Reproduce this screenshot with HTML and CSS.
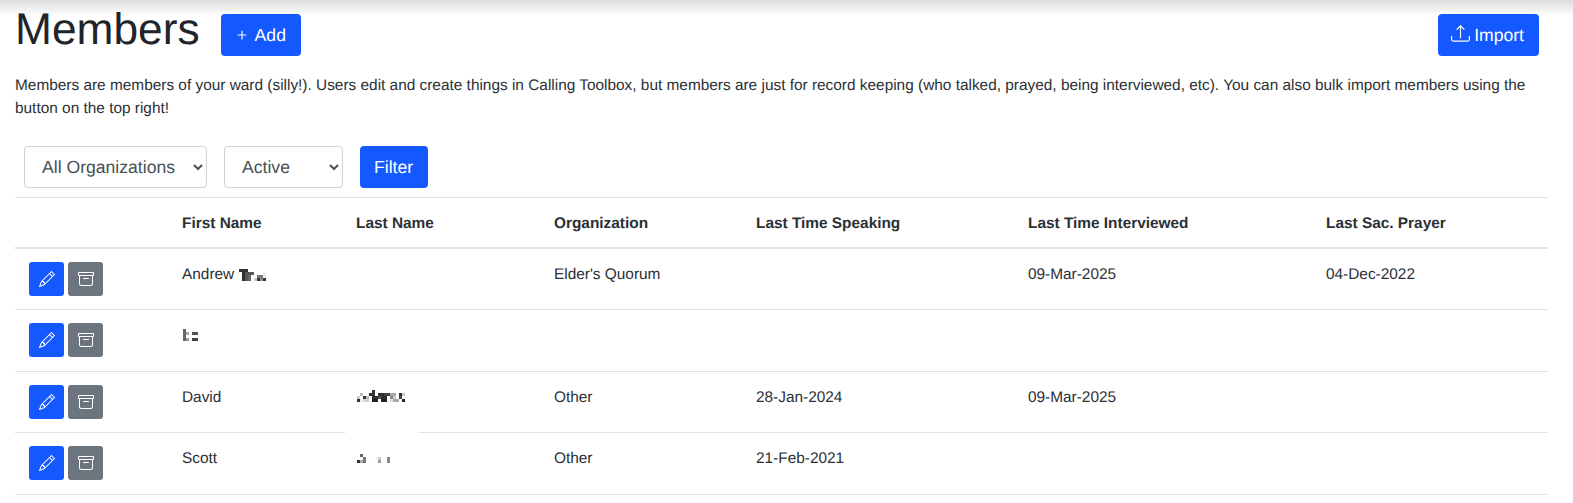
FILE: index.html
```html
<!DOCTYPE html>
<html lang="en">
<head>
    <meta charset="UTF-8">
    <title>Members</title>
    <link rel="stylesheet" href="styles.css">
</head>
<body>
    <div class="titleBar">
        <h1>Members</h1>
        <button class="btn addBtn">
            <svg class="plusIcon" viewBox="0 0 16 16" fill="currentColor"><path d="M8 4a.5.5 0 0 1 .5.5v3h3a.5.5 0 0 1 0 1h-3v3a.5.5 0 0 1-1 0v-3h-3a.5.5 0 0 1 0-1h3v-3A.5.5 0 0 1 8 4z"/></svg>
            Add
        </button>
        <button class="btn importBtn">
            <svg class="uploadIcon" viewBox="0 0 16 16" fill="currentColor"><path d="M.5 9.9a.5.5 0 0 1 .5.5v2.5a1 1 0 0 0 1 1h12a1 1 0 0 0 1-1v-2.5a.5.5 0 0 1 1 0v2.5a2 2 0 0 1-2 2H2a2 2 0 0 1-2-2v-2.5a.5.5 0 0 1 .5-.5z"/><path d="M7.646 1.146a.5.5 0 0 1 .708 0l3 3a.5.5 0 0 1-.708.708L8.5 2.707V11.5a.5.5 0 0 1-1 0V2.707L5.354 4.854a.5.5 0 1 1-.708-.708l3-3z"/></svg>
            Import
        </button>
    </div>
    <p class="intro">Members are members of your ward (silly!). Users edit and create things in Calling Toolbox, but members are just for record keeping (who talked, prayed, being interviewed, etc). You can also bulk import members using the button on the top right!</p>

    <div class="filters">
        <select class="pick orgPick"><option>All Organizations</option></select>
        <select class="pick statusPick"><option>Active</option></select>
        <button class="btn filterBtn">Filter</button>
    </div>

    <table class="members">
        <colgroup>
            <col class="colActions"><col class="colFirst"><col class="colLast"><col class="colOrg"><col class="colSpeak"><col class="colInterview"><col class="colPrayer">
        </colgroup>
        <thead>
            <tr>
                <th></th>
                <th>First Name</th>
                <th>Last Name</th>
                <th>Organization</th>
                <th>Last Time Speaking</th>
                <th>Last Time Interviewed</th>
                <th>Last Sac. Prayer</th>
            </tr>
        </thead>
        <tbody>
            <tr>
                <td class="actions"><div class="actionBtns">
                    <button class="iconBtn"><svg viewBox="0 0 16 16" fill="currentColor"><use href="#pencil"/></svg></button>
                    <button class="iconBtn grey"><svg viewBox="0 0 16 16" fill="currentColor"><use href="#archive"/></svg></button>
                </div></td>
                <td>Andrew
                    <svg class="blur blurAndrew" viewBox="0 0 27 13">
                        <rect x="0" y="0" width="9" height="3" fill="#333"/>
                        <rect x="3" y="3" width="3" height="9" fill="#2c2f33"/>
                        <rect x="6" y="3" width="3" height="9" fill="#555"/>
                        <rect x="9" y="3" width="6" height="3" fill="#555"/>
                        <rect x="9" y="6" width="3" height="6" fill="#666"/>
                        <rect x="15" y="9" width="3" height="3" fill="#ccc"/>
                        <rect x="18" y="6" width="6" height="3" fill="#777"/>
                        <rect x="18" y="9" width="3" height="3" fill="#333"/>
                        <rect x="21" y="9" width="3" height="3" fill="#888"/>
                        <rect x="24" y="3" width="3" height="6" fill="#eee"/>
                        <rect x="24" y="9" width="3" height="3" fill="#333"/>
                    </svg>
                </td>
                <td></td><td>Elder's Quorum</td><td></td><td>09-Mar-2025</td><td>04-Dec-2022</td>
            </tr>
            <tr>
                <td class="actions"><div class="actionBtns">
                    <button class="iconBtn"><svg viewBox="0 0 16 16" fill="currentColor"><use href="#pencil"/></svg></button>
                    <button class="iconBtn grey"><svg viewBox="0 0 16 16" fill="currentColor"><use href="#archive"/></svg></button>
                </div></td>
                <td>
                    <svg class="blur blurFirst" viewBox="0 0 16 12">
                        <rect x="0" y="0" width="3" height="12" fill="#666"/>
                        <rect x="3" y="3" width="3" height="3" fill="#aaa"/>
                        <rect x="3" y="9" width="3" height="3" fill="#999"/>
                        <rect x="9" y="3" width="6" height="3" fill="#555"/>
                        <rect x="9" y="9" width="6" height="3" fill="#444"/>
                    </svg>
                </td>
                <td></td><td></td><td></td><td></td><td></td>
            </tr>
            <tr>
                <td class="actions"><div class="actionBtns">
                    <button class="iconBtn"><svg viewBox="0 0 16 16" fill="currentColor"><use href="#pencil"/></svg></button>
                    <button class="iconBtn grey"><svg viewBox="0 0 16 16" fill="currentColor"><use href="#archive"/></svg></button>
                </div></td>
                <td>David</td>
                <td>
                    <svg class="blur blurDavid" viewBox="0 0 48 12">
                        <rect x="15" y="0" width="3" height="3" fill="#333"/>
                        <rect x="3" y="3" width="3" height="3" fill="#bbb"/>
                        <rect x="12" y="3" width="6" height="3" fill="#333"/>
                        <rect x="21" y="3" width="6" height="3" fill="#2c2f33"/>
                        <rect x="27" y="3" width="6" height="3" fill="#444"/>
                        <rect x="33" y="3" width="6" height="3" fill="#aaa"/>
                        <rect x="42" y="3" width="3" height="3" fill="#333"/>
                        <rect x="45" y="3" width="3" height="3" fill="#ccc"/>
                        <rect x="0" y="6" width="3" height="3" fill="#ccc"/>
                        <rect x="6" y="6" width="3" height="3" fill="#333"/>
                        <rect x="9" y="6" width="3" height="3" fill="#bbb"/>
                        <rect x="15" y="6" width="6" height="3" fill="#2c2f33"/>
                        <rect x="21" y="6" width="3" height="3" fill="#555"/>
                        <rect x="24" y="6" width="6" height="3" fill="#2c2f33"/>
                        <rect x="33" y="6" width="3" height="3" fill="#888"/>
                        <rect x="36" y="6" width="3" height="3" fill="#ccc"/>
                        <rect x="42" y="6" width="3" height="3" fill="#444"/>
                        <rect x="0" y="9" width="3" height="3" fill="#333"/>
                        <rect x="3" y="9" width="3" height="3" fill="#eee"/>
                        <rect x="6" y="9" width="3" height="3" fill="#ddd"/>
                        <rect x="9" y="9" width="3" height="3" fill="#ccc"/>
                        <rect x="15" y="9" width="6" height="3" fill="#222"/>
                        <rect x="24" y="9" width="6" height="3" fill="#222"/>
                        <rect x="33" y="9" width="3" height="3" fill="#ddd"/>
                        <rect x="36" y="9" width="6" height="3" fill="#aaa"/>
                        <rect x="45" y="9" width="3" height="3" fill="#222"/>
                    </svg>
                </td>
                <td>Other</td><td>28-Jan-2024</td><td>09-Mar-2025</td><td></td>
            </tr>
            <tr>
                <td class="actions"><div class="actionBtns">
                    <button class="iconBtn"><svg viewBox="0 0 16 16" fill="currentColor"><use href="#pencil"/></svg></button>
                    <button class="iconBtn grey"><svg viewBox="0 0 16 16" fill="currentColor"><use href="#archive"/></svg></button>
                </div></td>
                <td>Scott</td>
                <td>
                    <span class="lineGap"></span>
                    <svg class="blur blurScott" viewBox="0 0 36 9">
                        <rect x="0" y="6" width="3" height="3" fill="#333"/>
                        <rect x="3" y="0" width="3" height="3" fill="#666"/>
                        <rect x="6" y="3" width="3" height="6" fill="#777"/>
                        <rect x="3" y="6" width="3" height="3" fill="#aaa"/>
                        <rect x="18" y="3" width="3" height="3" fill="#f3f3f3"/>
                        <rect x="21" y="3" width="3" height="3" fill="#ccc"/>
                        <rect x="21" y="6" width="3" height="3" fill="#999"/>
                        <rect x="30" y="3" width="3" height="6" fill="#888"/>
                    </svg>
                </td>
                <td>Other</td><td>21-Feb-2021</td><td></td><td></td>
            </tr>
        </tbody>
    </table>

    <svg class="iconDefs">
        <symbol id="pencil" viewBox="0 0 16 16"><path d="M12.146.146a.5.5 0 0 1 .708 0l3 3a.5.5 0 0 1 0 .708l-10 10a.5.5 0 0 1-.168.11l-5 2a.5.5 0 0 1-.65-.65l2-5a.5.5 0 0 1 .11-.168l10-10zM11.207 2.5 13.5 4.793 14.793 3.5 12.5 1.207 11.207 2.5zm1.586 3L10.5 3.207 4 9.707V10h.5a.5.5 0 0 1 .5.5v.5h.5a.5.5 0 0 1 .5.5v.5h.293l6.5-6.5zm-9.761 5.175-.106.106-1.528 3.821 3.821-1.528.106-.106A.5.5 0 0 1 5 12.5V12h-.5a.5.5 0 0 1-.5-.5V11h-.5a.5.5 0 0 1-.468-.325z"/></symbol>
        <symbol id="archive" viewBox="0 0 16 16"><path d="M0 2a1 1 0 0 1 1-1h14a1 1 0 0 1 1 1v2a1 1 0 0 1-1 1v7.5a2.5 2.5 0 0 1-2.5 2.5h-9A2.5 2.5 0 0 1 1 12.5V5a1 1 0 0 1-1-1V2zm2 3v7.5A1.5 1.5 0 0 0 3.5 14h9a1.5 1.5 0 0 0 1.5-1.5V5H2zm13-3H1v2h14V2zM5 7.5a.5.5 0 0 1 .5-.5h5a.5.5 0 0 1 0 1h-5a.5.5 0 0 1-.5-.5z"/></symbol>
    </svg>
</body>
</html>
```

FILE: styles.css
```css
html, body {
    height: 100%;
}
body {
    margin: 0;
    padding: 0 25px 0 15px;
    box-sizing: border-box;
    overflow: hidden;
    font-family: "Liberation Sans", Arial, sans-serif;
    font-size: 15.4px;
    color: #2b3035;
    text-rendering: geometricPrecision;
    background: linear-gradient(#dcdcdc, #ffffff) no-repeat top / 100% 16px #fff;
}
.titleBar {
    display: flex;
    align-items: flex-start;
    height: 56px;
    padding-top: 5px;
    box-sizing: border-box;
}
h1 {
    margin: 0 21px 0 0;
    font-size: 44.3px;
    font-weight: 400;
    line-height: 50px;
    color: #212529;
}
.btn {
    height: 42px;
    padding: 0 14px;
    border: 0;
    border-radius: 4px;
    background-color: #1458ff;
    color: #fff;
    font-family: inherit;
    font-size: 17.6px;
    text-rendering: geometricPrecision;
    white-space: nowrap;
}
.addBtn {
    display: flex;
    align-items: center;
    gap: 4px;
    margin-top: 9px;
    padding: 0 15px 0 12px;
}
.plusIcon {
    width: 18px;
    height: 18px;
}
.importBtn {
    display: flex;
    align-items: center;
    gap: 4px;
    margin-top: 9px;
    margin-left: auto;
    margin-right: 9px;
    padding: 0 15px 0 13px;
}
.uploadIcon {
    width: 19px;
    height: 19px;
    margin-top: -3px;
}
.filterBtn {
    padding: 0 15px 0 14px;
}
.intro {
    margin: 18px 0 0;
    line-height: 23px;
}
.filters {
    display: flex;
    align-items: center;
    gap: 17px;
    height: 42px;
    margin: 26px 0 9px 9px;
}
.pick {
    height: 42px;
    padding: 0 0 0 13px;
    border: 1px solid #ced4da;
    border-radius: 4px;
    background-color: #fff;
    color: #495057;
    font-family: inherit;
    font-size: 17.6px;
    text-rendering: geometricPrecision;
}
.orgPick {
    width: 183px;
}
.statusPick {
    width: 119px;
}
.members {
    width: 1533px;
    table-layout: fixed;
    border-collapse: collapse;
    border-top: 1px solid #dee2e6;
}
.colActions { width: 153px; }
.colFirst { width: 174px; }
.colLast { width: 198px; }
.colOrg { width: 202px; }
.colSpeak { width: 272px; }
.colInterview { width: 298px; }
.colPrayer { width: 236px; }
th {
    height: 50.5px;
    padding: 3px 14px 0;
    box-sizing: border-box;
    border-bottom: 2px solid #dee2e6;
    font-weight: 700;
    text-align: left;
}
td {
    height: 61.5px;
    padding: 17px 14px 0;
    box-sizing: border-box;
    border-bottom: 1px solid #dee2e6;
    vertical-align: top;
    position: relative;
}
td.actions {
    padding-top: 13px;
}
.actionBtns {
    display: flex;
    gap: 4px;
}
.iconBtn {
    display: flex;
    align-items: center;
    justify-content: center;
    width: 35px;
    height: 34px;
    padding: 0;
    border: 0;
    border-radius: 3px;
    background-color: #1458ff;
    color: #fff;
}
.iconBtn.grey {
    background-color: #6c757d;
}
.iconBtn svg {
    width: 16px;
    height: 16px;
}
.blur {
    display: inline-block;
}
.blurAndrew { width: 27px; height: 13px; margin-left: 1px; vertical-align: -3px; }
.blurFirst { width: 16px; height: 12px; margin: 2px 0 0 1px; }
.blurDavid { width: 48px; height: 12px; margin: 1px 0 0 1px; }
.blurScott { width: 36px; height: 9px; margin: 4px 0 0 1px; }
/* the redaction box also wipes a bit of the row line above */
.lineGap {
    position: absolute;
    left: 3px;
    top: -2px;
    width: 74px;
    height: 3px;
    background-color: #fff;
}
.iconDefs {
    display: none;
}
```
